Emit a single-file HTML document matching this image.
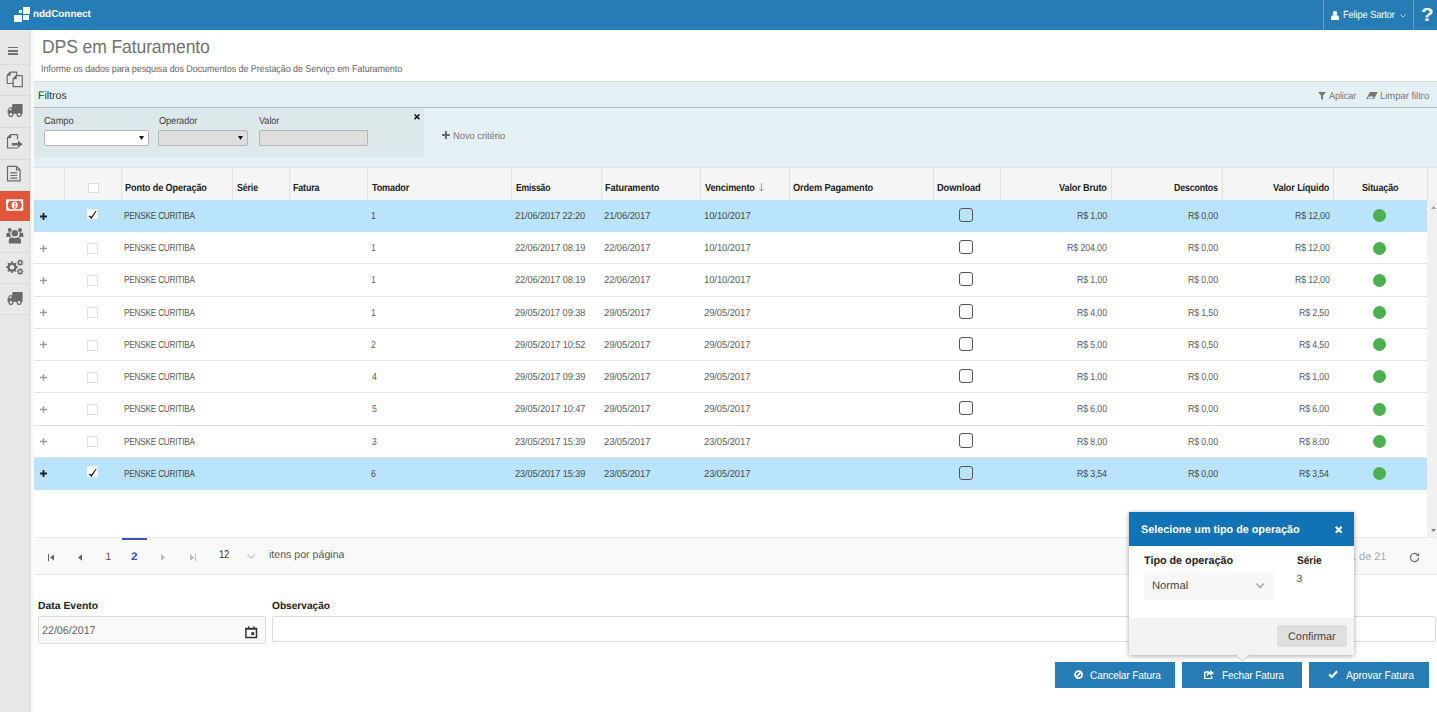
<!DOCTYPE html>
<html lang="pt-br"><head><meta charset="utf-8"><title>DPS em Faturamento</title>
<style>
html,body{margin:0;padding:0;}
body{width:1437px;height:712px;overflow:hidden;position:relative;background:#fff;font-family:"Liberation Sans",sans-serif;text-rendering:geometricPrecision;}
.b{position:absolute;box-sizing:border-box;display:block;}
.t{position:absolute;white-space:nowrap;display:block;}
</style></head><body>
<div class="b" style="left:0px;top:0px;width:1437px;height:30px;background:#267db5;"></div>
<div class="b" style="left:23.3px;top:7px;width:6.8px;height:6.5px;background:#fff;"></div>
<div class="b" style="left:18.7px;top:10.1px;width:3.4px;height:3.4px;background:#fff;"></div>
<div class="b" style="left:14.2px;top:15px;width:7.9px;height:7.1px;background:#fff;"></div>
<div class="b" style="left:23.3px;top:15px;width:5.8px;height:5px;background:#fff;"></div>
<span class="t" style="left:32.75px;top:8px;font-size:10px;line-height:13px;color:#fff;font-weight:bold;letter-spacing:-0.009px;transform:scaleX(0.9919);transform-origin:0 50%;">nddConnect</span>
<div class="b" style="left:1323px;top:0px;width:1px;height:30px;background:rgba(255,255,255,.28);"></div>
<div class="b" style="left:1413px;top:0px;width:1px;height:30px;background:rgba(255,255,255,.28);"></div>
<svg class="b" style="left:1331px;top:11px;" width="8" height="9" viewBox="0 0 8 9"><circle cx="4" cy="2.3" r="2.3" fill="#fff"/><path d="M0 9 V6.6 Q0 4.2 2.2 4.2 H5.8 Q8 4.2 8 6.6 V9 Z" fill="#fff"/></svg>
<span class="t" style="left:1343.44px;top:9px;font-size:10.4px;line-height:14px;color:#fff;letter-spacing:-0.099px;transform:scaleX(0.8898);transform-origin:0 50%;">Felipe Sartor</span>
<svg class="b" style="left:1399.7px;top:13.6px;" width="6" height="3.6" viewBox="0 0 6 3.6"><path d="M0.4 0.4 L3 3 L5.6 0.4" fill="none" stroke="#c5dcec" stroke-width="0.9"/></svg>
<span class="t" style="left:1421.36px;top:3px;font-size:18.6px;line-height:24px;color:#fff;font-weight:bold;transform:scaleX(1.1113);transform-origin:0 50%;">?</span>
<div class="b" style="left:0px;top:30px;width:29px;height:682px;background:#e8e8e8;"></div>
<div class="b" style="left:29px;top:30px;width:1px;height:682px;background:#dbdbdb;"></div>
<div class="b" style="left:30px;top:30px;width:4px;height:682px;background:linear-gradient(to right,#ececec,#fff);"></div>
<div class="b" style="left:0px;top:64px;width:29px;height:1px;background:#dcdcda;"></div>
<div class="b" style="left:0px;top:95px;width:29px;height:1px;background:#dcdcda;"></div>
<div class="b" style="left:0px;top:127px;width:29px;height:1px;background:#dcdcda;"></div>
<div class="b" style="left:0px;top:159px;width:29px;height:1px;background:#dcdcda;"></div>
<div class="b" style="left:0px;top:252px;width:29px;height:1px;background:#dcdcda;"></div>
<div class="b" style="left:0px;top:283px;width:29px;height:1px;background:#dcdcda;"></div>
<div class="b" style="left:0px;top:314px;width:29px;height:1px;background:#dcdcda;"></div>
<div class="b" style="left:0px;top:190.5px;width:30px;height:30.5px;background:#e2553a;"></div>
<div class="b" style="left:8.2px;top:46.8px;width:10.2px;height:1.6px;background:#707070;"></div>
<div class="b" style="left:8.2px;top:50.099999999999994px;width:10.2px;height:1.6px;background:#707070;"></div>
<div class="b" style="left:8.2px;top:53.4px;width:10.2px;height:1.6px;background:#707070;"></div>
<svg class="b" style="left:5.5px;top:70.5px;" width="18" height="17" viewBox="5.5 70.5 18 17"><path d="M9.6 71.7 H16.2 V75 M13 83 H6.7 V74.6 L9.6 71.7 V74.6 H6.7" fill="none" stroke="#6a6a6a" stroke-width="1.2" stroke-linejoin="round"/><path d="M15.6 75.2 H21.8 V86.1 H12.6 V78.2 L15.6 75.2 V78.2 H12.6" fill="none" stroke="#6a6a6a" stroke-width="1.2" stroke-linejoin="round"/></svg>
<svg class="b" style="left:6.5px;top:104.2px;" width="17" height="13" viewBox="6.5 0 17 13"><path d="M11.8 0 H22.1 V9.8 H7.1 V6.2 L9 3.3 H11.8 Z" fill="#6a6a6a"/><path d="M8.3 6.2 L9.6 4.3 H10.9 V6.2 Z" fill="#e9e9e9"/><circle cx="10.4" cy="10.4" r="2" fill="#e9e9e9" stroke="#6a6a6a" stroke-width="1.3"/><circle cx="18.6" cy="10.4" r="2" fill="#e9e9e9" stroke="#6a6a6a" stroke-width="1.3"/></svg>
<svg class="b" style="left:6.5px;top:292.3px;" width="17" height="13" viewBox="6.5 0 17 13"><path d="M11.8 0 H22.1 V9.8 H7.1 V6.2 L9 3.3 H11.8 Z" fill="#6a6a6a"/><path d="M8.3 6.2 L9.6 4.3 H10.9 V6.2 Z" fill="#e9e9e9"/><circle cx="10.4" cy="10.4" r="2" fill="#e9e9e9" stroke="#6a6a6a" stroke-width="1.3"/><circle cx="18.6" cy="10.4" r="2" fill="#e9e9e9" stroke="#6a6a6a" stroke-width="1.3"/></svg>
<svg class="b" style="left:5.5px;top:133px;" width="18" height="17" viewBox="5.5 133 18 17"><path d="M17 139.6 V134.7 H10 L7 137.7 V148 H17 V147.2 M10 134.7 V137.7 H7" fill="none" stroke="#6a6a6a" stroke-width="1.2" stroke-linejoin="round"/><path d="M11.3 143 H17.5 V140.6 L22.1 144.2 L17.5 147.8 V145.4 H11.3 Z" fill="#6a6a6a"/></svg>
<svg class="b" style="left:5.5px;top:165px;" width="16" height="18" viewBox="5.5 165 16 18"><path d="M7 166.4 H16 L19.6 170 V180.9 H7 Z M16 166.4 V170 H19.6" fill="none" stroke="#6a6a6a" stroke-width="1.2" stroke-linejoin="round"/><path d="M9.8 172.9 H16.7 M9.8 175.5 H16.7 M9.8 178.1 H16.7" stroke="#6a6a6a" stroke-width="1.1"/></svg>
<svg class="b" style="left:6px;top:199px;" width="18" height="12" viewBox="6 199 18 12"><rect x="6.1" y="199.3" width="17.1" height="11.5" fill="#fff"/><path d="M9.6 200.9 H19.9 Q21.9 203 21.9 205.05 Q21.9 207.1 19.9 209.2 H9.6 Q7.6 207.1 7.6 205.05 Q7.6 203 9.6 200.9 Z" fill="#e2583b"/><ellipse cx="14.75" cy="205.05" rx="3.1" ry="3.6" fill="#fff"/><path d="M14 203.8 L15.1 203 V207 M14 207.1 H16.1" fill="none" stroke="#e2583b" stroke-width="0.9"/></svg>
<svg class="b" style="left:6px;top:227px;" width="18" height="17" viewBox="6 227 18 17"><circle cx="9.7" cy="229.9" r="2" fill="#6a6a6a"/><circle cx="20" cy="229.9" r="2" fill="#6a6a6a"/><path d="M6.4 237 V234.6 Q6.4 232.6 8.4 232.6 H10.4 Q10 235 11 237 Z" fill="#6a6a6a"/><path d="M23.4 237 V234.6 Q23.4 232.6 21.4 232.6 H19.4 Q19.8 235 18.8 237 Z" fill="#6a6a6a"/><circle cx="14.8" cy="233.3" r="3.2" fill="#6a6a6a"/><path d="M8.8 243.5 V240.6 Q8.8 237.4 12 237.2 Q14.8 239 17.7 237.2 Q21 237.4 21 240.6 V243.5 Q21 243.6 20 243.6 H9.8 Q8.8 243.6 8.8 243.5 Z" fill="#6a6a6a"/></svg>
<svg class="b" style="left:5px;top:258px;" width="20" height="18" viewBox="5 258 20 18"><path d="M17.87 266.62 L17.87 267.78 L16.31 268.51 L15.97 269.32 L16.56 270.94 L15.74 271.76 L14.12 271.17 L13.31 271.51 L12.58 273.07 L11.42 273.07 L10.69 271.51 L9.88 271.17 L8.26 271.76 L7.44 270.94 L8.03 269.32 L7.69 268.51 L6.13 267.78 L6.13 266.62 L7.69 265.89 L8.03 265.08 L7.44 263.46 L8.26 262.64 L9.88 263.23 L10.69 262.89 L11.42 261.33 L12.58 261.33 L13.31 262.89 L14.12 263.23 L15.74 262.64 L16.56 263.46 L15.97 265.08 L16.31 265.89 Z M14.3 267.2 A2.3 2.3 0 1 0 9.7 267.2 A2.3 2.3 0 1 0 14.3 267.2 Z" fill="#6a6a6a" fill-rule="evenodd"/><path d="M23.48 262.28 L23.48 262.92 L22.50 263.30 L22.32 263.73 L22.75 264.69 L22.29 265.15 L21.33 264.72 L20.90 264.90 L20.52 265.88 L19.88 265.88 L19.50 264.90 L19.07 264.72 L18.11 265.15 L17.65 264.69 L18.08 263.73 L17.90 263.30 L16.92 262.92 L16.92 262.28 L17.90 261.90 L18.08 261.47 L17.65 260.51 L18.11 260.05 L19.07 260.48 L19.50 260.30 L19.88 259.32 L20.52 259.32 L20.90 260.30 L21.33 260.48 L22.29 260.05 L22.75 260.51 L22.32 261.47 L22.50 261.90 Z M21.4 262.6 A1.2 1.2 0 1 0 19.0 262.6 A1.2 1.2 0 1 0 21.4 262.6 Z" fill="#6a6a6a" fill-rule="evenodd"/><path d="M23.48 271.28 L23.48 271.92 L22.50 272.30 L22.32 272.73 L22.75 273.69 L22.29 274.15 L21.33 273.72 L20.90 273.90 L20.52 274.88 L19.88 274.88 L19.50 273.90 L19.07 273.72 L18.11 274.15 L17.65 273.69 L18.08 272.73 L17.90 272.30 L16.92 271.92 L16.92 271.28 L17.90 270.90 L18.08 270.47 L17.65 269.51 L18.11 269.05 L19.07 269.48 L19.50 269.30 L19.88 268.32 L20.52 268.32 L20.90 269.30 L21.33 269.48 L22.29 269.05 L22.75 269.51 L22.32 270.47 L22.50 270.90 Z M21.4 271.6 A1.2 1.2 0 1 0 19.0 271.6 A1.2 1.2 0 1 0 21.4 271.6 Z" fill="#6a6a6a" fill-rule="evenodd"/></svg>
<span class="t" style="left:41.66px;top:35px;font-size:18.9px;line-height:25px;color:#727272;letter-spacing:-0.134px;transform:scaleX(0.9306);transform-origin:0 50%;">DPS em Faturamento</span>
<span class="t" style="left:41.17px;top:63px;font-size:10px;line-height:13px;color:#666;letter-spacing:-0.090px;transform:scaleX(0.9005);transform-origin:0 50%;">Informe os dados para pesquisa dos Documentos de Prestação de Serviço em Faturamento</span>
<div class="b" style="left:34px;top:81px;width:1403px;height:86px;background:#e4f0f3;border-top:1px solid #d3dde0;"></div>
<div class="b" style="left:34px;top:107px;width:1403px;height:1px;background:#b3bcbf;"></div>
<span class="t" style="left:37.53px;top:89px;font-size:10.9px;line-height:14px;color:#333;letter-spacing:-0.022px;transform:scaleX(0.9735);transform-origin:0 50%;">Filtros</span>
<div class="b" style="left:34px;top:108px;width:390px;height:48.5px;background:#dde8ea;"></div>
<span class="t" style="left:43.53px;top:115px;font-size:10.2px;line-height:13px;color:#444;letter-spacing:-0.125px;transform:scaleX(0.9144);transform-origin:0 50%;">Campo</span>
<span class="t" style="left:158.57px;top:115px;font-size:10.2px;line-height:13px;color:#444;letter-spacing:-0.106px;transform:scaleX(0.9052);transform-origin:0 50%;">Operador</span>
<span class="t" style="left:259.06px;top:115px;font-size:10.2px;line-height:13px;color:#444;letter-spacing:-0.102px;transform:scaleX(0.9025);transform-origin:0 50%;">Valor</span>
<div class="b" style="left:43.5px;top:130px;width:105px;height:15.5px;background:#fff;border:1px solid #b5b5b5;border-radius:2px;"></div>
<div class="b" style="left:158px;top:130px;width:90px;height:15.5px;background:#dedede;border:1px solid #b5b5b5;border-radius:2px;"></div>
<div class="b" style="left:259px;top:130px;width:108.75px;height:15.5px;background:#dedede;border:1px solid #b5b5b5;border-radius:1px;"></div>
<svg class="b" style="left:138.5px;top:136px;" width="5" height="4" viewBox="0 0 5 4"><path d="M0 0 H5 L2.5 4 Z" fill="#111"/></svg>
<svg class="b" style="left:238.2px;top:136px;" width="5" height="4" viewBox="0 0 5 4"><path d="M0 0 H5 L2.5 4 Z" fill="#111"/></svg>
<svg class="b" style="left:413.5px;top:114px;" width="6" height="5.6" viewBox="0 0 6 5.6"><path d="M0.6 0.5 L5.4 5.1 M5.4 0.5 L0.6 5.1" stroke="#111" stroke-width="1.5"/></svg>
<svg class="b" style="left:441.8px;top:131px;" width="7.8" height="8" viewBox="0 0 8 8"><path d="M4 0 V8 M0 4 H8" stroke="#666" stroke-width="2"/></svg>
<span class="t" style="left:453.13px;top:130px;font-size:10px;line-height:13px;color:#777;letter-spacing:-0.050px;transform:scaleX(0.9394);transform-origin:0 50%;">Novo critério</span>
<svg class="b" style="left:1317.5px;top:91.5px;" width="8" height="8.2" viewBox="0 0 8 8.2"><path d="M0 0 H8 L5 3.6 V8.2 L3 6.6 V3.6 Z" fill="#777"/></svg>
<span class="t" style="left:1328.79px;top:90px;font-size:10px;line-height:13px;color:#777;letter-spacing:-0.089px;transform:scaleX(0.9045);transform-origin:0 50%;">Aplicar</span>
<svg class="b" style="left:1366px;top:91.5px;" width="11.7" height="7.5" viewBox="0 0 11.7 7.5"><path d="M4 0 H11.7 L7.7 7.5 H0 Z" fill="#777"/><path d="M2.6 4.6 H7.6 L6.7 6.4 H1.7 Z" fill="#e4f0f3"/></svg>
<span class="t" style="left:1379.72px;top:90px;font-size:10px;line-height:13px;color:#777;letter-spacing:-0.038px;transform:scaleX(0.9498);transform-origin:0 50%;">Limpar filtro</span>
<div class="b" style="left:34px;top:167px;width:1403px;height:33px;background:#f5f5f5;border-top:1px solid #e2e2e2;"></div>
<div class="b" style="left:64.0px;top:168px;width:1px;height:32px;background:#e3e3e3;"></div>
<div class="b" style="left:120.5px;top:168px;width:1px;height:32px;background:#e3e3e3;"></div>
<div class="b" style="left:232.0px;top:168px;width:1px;height:32px;background:#e3e3e3;"></div>
<div class="b" style="left:288.5px;top:168px;width:1px;height:32px;background:#e3e3e3;"></div>
<div class="b" style="left:367.0px;top:168px;width:1px;height:32px;background:#e3e3e3;"></div>
<div class="b" style="left:510.5px;top:168px;width:1px;height:32px;background:#e3e3e3;"></div>
<div class="b" style="left:600.5px;top:168px;width:1px;height:32px;background:#e3e3e3;"></div>
<div class="b" style="left:700.0px;top:168px;width:1px;height:32px;background:#e3e3e3;"></div>
<div class="b" style="left:789.0px;top:168px;width:1px;height:32px;background:#e3e3e3;"></div>
<div class="b" style="left:932.5px;top:168px;width:1px;height:32px;background:#e3e3e3;"></div>
<div class="b" style="left:999.5px;top:168px;width:1px;height:32px;background:#e3e3e3;"></div>
<div class="b" style="left:1111.0px;top:168px;width:1px;height:32px;background:#e3e3e3;"></div>
<div class="b" style="left:1221.5px;top:168px;width:1px;height:32px;background:#e3e3e3;"></div>
<div class="b" style="left:1332.5px;top:168px;width:1px;height:32px;background:#e3e3e3;"></div>
<div class="b" style="left:1426.5px;top:168px;width:1px;height:32px;background:#e3e3e3;"></div>
<span class="t" style="left:124.89px;top:182px;font-size:10.3px;line-height:13px;color:#222;font-weight:bold;letter-spacing:-0.123px;transform:scaleX(0.8864);transform-origin:0 50%;">Ponto de Operação</span>
<span class="t" style="left:236.75px;top:182px;font-size:10.3px;line-height:13px;color:#222;font-weight:bold;letter-spacing:-0.164px;transform:scaleX(0.8579);transform-origin:0 50%;">Série</span>
<span class="t" style="left:293.16px;top:182px;font-size:10.3px;line-height:13px;color:#222;font-weight:bold;letter-spacing:-0.157px;transform:scaleX(0.8645);transform-origin:0 50%;">Fatura</span>
<span class="t" style="left:371.65px;top:182px;font-size:10.3px;line-height:13px;color:#222;font-weight:bold;letter-spacing:-0.161px;transform:scaleX(0.8795);transform-origin:0 50%;">Tomador</span>
<span class="t" style="left:515.93px;top:182px;font-size:10.3px;line-height:13px;color:#222;font-weight:bold;letter-spacing:-0.212px;transform:scaleX(0.8373);transform-origin:0 50%;">Emissão</span>
<span class="t" style="left:604.89px;top:182px;font-size:10.3px;line-height:13px;color:#222;font-weight:bold;letter-spacing:-0.124px;transform:scaleX(0.8908);transform-origin:0 50%;">Faturamento</span>
<span class="t" style="left:704.94px;top:182px;font-size:10.3px;line-height:13px;color:#222;font-weight:bold;letter-spacing:-0.139px;transform:scaleX(0.8825);transform-origin:0 50%;">Vencimento</span>
<svg class="b" style="left:758.5px;top:182.5px;" width="5" height="8.5" viewBox="0 0 5 8.5"><path d="M2.5 0 V8 M0.5 5.8 L2.5 8 L4.5 5.8" fill="none" stroke="#888" stroke-width="0.8"/></svg>
<span class="t" style="left:793.12px;top:182px;font-size:10.3px;line-height:13px;color:#222;font-weight:bold;letter-spacing:-0.128px;transform:scaleX(0.8935);transform-origin:0 50%;">Ordem Pagamento</span>
<span class="t" style="left:936.88px;top:182px;font-size:10.3px;line-height:13px;color:#222;font-weight:bold;letter-spacing:-0.120px;transform:scaleX(0.9042);transform-origin:0 50%;">Download</span>
<span class="t" style="left:1059.19px;top:182px;font-size:10.3px;line-height:13px;color:#222;font-weight:bold;letter-spacing:-0.120px;transform:scaleX(0.8822);transform-origin:0 50%;">Valor Bruto</span>
<span class="t" style="left:1174.16px;top:182px;font-size:10.3px;line-height:13px;color:#222;font-weight:bold;letter-spacing:-0.173px;transform:scaleX(0.8571);transform-origin:0 50%;">Descontos</span>
<span class="t" style="left:1272.94px;top:182px;font-size:10.3px;line-height:13px;color:#222;font-weight:bold;letter-spacing:-0.116px;transform:scaleX(0.8837);transform-origin:0 50%;">Valor Líquido</span>
<span class="t" style="left:1361.74px;top:182px;font-size:10.3px;line-height:13px;color:#222;font-weight:bold;letter-spacing:-0.143px;transform:scaleX(0.8730);transform-origin:0 50%;">Situação</span>
<div class="b" style="left:88px;top:182.5px;width:10.5px;height:10.5px;background:#fff;border:1px solid #dcdcdc;"></div>
<div class="b" style="left:34px;top:200.0px;width:1393px;height:32.25px;background:#b9e4fc;"></div>
<svg class="b" style="left:40px;top:212.5px;" width="7" height="7" viewBox="0 0 7 7"><path d="M3.5 0 V7 M0 3.5 H7" stroke="#222" stroke-width="1.8"/></svg>
<div class="b" style="left:87.4px;top:208.6px;width:10.6px;height:10.7px;background:#fff;border:1px solid #f0f6fa;"></div>
<svg class="b" style="left:88.4px;top:210.2px;" width="9" height="9" viewBox="0 0 9 9"><path d="M0.9 6.1 L3.4 8.6 L8.2 0.9 L3.5 6.9 Z" fill="#111" stroke="#111" stroke-width="0.7" stroke-linejoin="round"/></svg>
<span class="t" style="left:124.23px;top:210px;font-size:10.2px;line-height:13px;color:#4a4a4a;letter-spacing:-0.245px;transform:scaleX(0.8042);transform-origin:0 50%;">PENSKE CURITIBA</span>
<span class="t" style="left:371.22px;top:210px;font-size:10.2px;line-height:13px;color:#4a4a4a;transform:scaleX(.85);transform-origin:0 50%;">1</span>
<span class="t" style="left:515.04px;top:210px;font-size:10.2px;line-height:13px;color:#4a4a4a;letter-spacing:-0.095px;transform:scaleX(0.9016);transform-origin:0 50%;">21/06/2017 22:20</span>
<span class="t" style="left:604.03px;top:210px;font-size:10.2px;line-height:13px;color:#4a4a4a;letter-spacing:-0.079px;transform:scaleX(0.9225);transform-origin:0 50%;">21/06/2017</span>
<span class="t" style="left:703.78px;top:210px;font-size:10.2px;line-height:13px;color:#4a4a4a;letter-spacing:-0.074px;transform:scaleX(0.9267);transform-origin:0 50%;">10/10/2017</span>
<div class="b" style="left:959px;top:207.8px;width:14.2px;height:14.2px;background:transparent;border:1.5px solid #555;border-radius:3px;"></div>
<span class="t" style="left:1077.03px;top:210px;font-size:10.2px;line-height:13px;color:#4a4a4a;letter-spacing:-0.148px;transform:scaleX(0.8628);transform-origin:0 50%;">R$ 1,00</span>
<span class="t" style="left:1188.03px;top:210px;font-size:10.2px;line-height:13px;color:#4a4a4a;letter-spacing:-0.148px;transform:scaleX(0.8628);transform-origin:0 50%;">R$ 0,00</span>
<span class="t" style="left:1294.53px;top:210px;font-size:10.2px;line-height:13px;color:#4a4a4a;letter-spacing:-0.148px;transform:scaleX(0.8625);transform-origin:0 50%;">R$ 12,00</span>
<div class="b" style="left:1373.3px;top:209.3px;width:13px;height:13px;background:#4caf50;border-radius:50%;"></div>
<div class="b" style="left:34px;top:263.44px;width:1393px;height:1px;background:#e4e4e4;"></div>
<svg class="b" style="left:40px;top:244.72px;" width="7" height="7" viewBox="0 0 7 7"><path d="M3.5 0 V7 M0 3.5 H7" stroke="#9a9a9a" stroke-width="1.4"/></svg>
<div class="b" style="left:87.2px;top:243px;width:11px;height:11px;background:#fff;border:1px solid #e0e0e0;"></div>
<span class="t" style="left:124.23px;top:242px;font-size:10.2px;line-height:13px;color:#5c5c5c;letter-spacing:-0.245px;transform:scaleX(0.8042);transform-origin:0 50%;">PENSKE CURITIBA</span>
<span class="t" style="left:371.22px;top:242px;font-size:10.2px;line-height:13px;color:#5c5c5c;transform:scaleX(.85);transform-origin:0 50%;">1</span>
<span class="t" style="left:515.04px;top:242px;font-size:10.2px;line-height:13px;color:#5c5c5c;letter-spacing:-0.094px;transform:scaleX(0.9025);transform-origin:0 50%;">22/06/2017 08:19</span>
<span class="t" style="left:604.03px;top:242px;font-size:10.2px;line-height:13px;color:#5c5c5c;letter-spacing:-0.079px;transform:scaleX(0.9225);transform-origin:0 50%;">22/06/2017</span>
<span class="t" style="left:703.78px;top:242px;font-size:10.2px;line-height:13px;color:#5c5c5c;letter-spacing:-0.074px;transform:scaleX(0.9267);transform-origin:0 50%;">10/10/2017</span>
<div class="b" style="left:959px;top:240.02px;width:14.2px;height:14.2px;background:#fff;border:1.5px solid #555;border-radius:3px;"></div>
<span class="t" style="left:1067.22px;top:242px;font-size:10.2px;line-height:13px;color:#5c5c5c;letter-spacing:-0.142px;transform:scaleX(0.8679);transform-origin:0 50%;">R$ 204,00</span>
<span class="t" style="left:1188.03px;top:242px;font-size:10.2px;line-height:13px;color:#5c5c5c;letter-spacing:-0.148px;transform:scaleX(0.8628);transform-origin:0 50%;">R$ 0,00</span>
<span class="t" style="left:1294.53px;top:242px;font-size:10.2px;line-height:13px;color:#5c5c5c;letter-spacing:-0.148px;transform:scaleX(0.8625);transform-origin:0 50%;">R$ 12,00</span>
<div class="b" style="left:1373.3px;top:241.52px;width:13px;height:13px;background:#4caf50;border-radius:50%;"></div>
<div class="b" style="left:34px;top:295.65999999999997px;width:1393px;height:1px;background:#e4e4e4;"></div>
<svg class="b" style="left:40px;top:276.94px;" width="7" height="7" viewBox="0 0 7 7"><path d="M3.5 0 V7 M0 3.5 H7" stroke="#9a9a9a" stroke-width="1.4"/></svg>
<div class="b" style="left:87.2px;top:275px;width:11px;height:11px;background:#fff;border:1px solid #e0e0e0;"></div>
<span class="t" style="left:124.23px;top:274px;font-size:10.2px;line-height:13px;color:#5c5c5c;letter-spacing:-0.245px;transform:scaleX(0.8042);transform-origin:0 50%;">PENSKE CURITIBA</span>
<span class="t" style="left:371.22px;top:274px;font-size:10.2px;line-height:13px;color:#5c5c5c;transform:scaleX(.85);transform-origin:0 50%;">1</span>
<span class="t" style="left:515.04px;top:274px;font-size:10.2px;line-height:13px;color:#5c5c5c;letter-spacing:-0.094px;transform:scaleX(0.9025);transform-origin:0 50%;">22/06/2017 08:19</span>
<span class="t" style="left:604.03px;top:274px;font-size:10.2px;line-height:13px;color:#5c5c5c;letter-spacing:-0.079px;transform:scaleX(0.9225);transform-origin:0 50%;">22/06/2017</span>
<span class="t" style="left:703.78px;top:274px;font-size:10.2px;line-height:13px;color:#5c5c5c;letter-spacing:-0.074px;transform:scaleX(0.9267);transform-origin:0 50%;">10/10/2017</span>
<div class="b" style="left:959px;top:272.24px;width:14.2px;height:14.2px;background:#fff;border:1.5px solid #555;border-radius:3px;"></div>
<span class="t" style="left:1077.03px;top:274px;font-size:10.2px;line-height:13px;color:#5c5c5c;letter-spacing:-0.148px;transform:scaleX(0.8628);transform-origin:0 50%;">R$ 1,00</span>
<span class="t" style="left:1188.03px;top:274px;font-size:10.2px;line-height:13px;color:#5c5c5c;letter-spacing:-0.148px;transform:scaleX(0.8628);transform-origin:0 50%;">R$ 0,00</span>
<span class="t" style="left:1294.53px;top:274px;font-size:10.2px;line-height:13px;color:#5c5c5c;letter-spacing:-0.148px;transform:scaleX(0.8625);transform-origin:0 50%;">R$ 12,00</span>
<div class="b" style="left:1373.3px;top:273.74px;width:13px;height:13px;background:#4caf50;border-radius:50%;"></div>
<div class="b" style="left:34px;top:327.88px;width:1393px;height:1px;background:#e4e4e4;"></div>
<svg class="b" style="left:40px;top:309.15999999999997px;" width="7" height="7" viewBox="0 0 7 7"><path d="M3.5 0 V7 M0 3.5 H7" stroke="#9a9a9a" stroke-width="1.4"/></svg>
<div class="b" style="left:87.2px;top:307px;width:11px;height:11px;background:#fff;border:1px solid #e0e0e0;"></div>
<span class="t" style="left:124.23px;top:307px;font-size:10.2px;line-height:13px;color:#5c5c5c;letter-spacing:-0.245px;transform:scaleX(0.8042);transform-origin:0 50%;">PENSKE CURITIBA</span>
<span class="t" style="left:371.22px;top:307px;font-size:10.2px;line-height:13px;color:#5c5c5c;transform:scaleX(.85);transform-origin:0 50%;">1</span>
<span class="t" style="left:515.04px;top:307px;font-size:10.2px;line-height:13px;color:#5c5c5c;letter-spacing:-0.094px;transform:scaleX(0.9021);transform-origin:0 50%;">29/05/2017 09:38</span>
<span class="t" style="left:604.03px;top:307px;font-size:10.2px;line-height:13px;color:#5c5c5c;letter-spacing:-0.079px;transform:scaleX(0.9225);transform-origin:0 50%;">29/05/2017</span>
<span class="t" style="left:704.03px;top:307px;font-size:10.2px;line-height:13px;color:#5c5c5c;letter-spacing:-0.079px;transform:scaleX(0.9225);transform-origin:0 50%;">29/05/2017</span>
<div class="b" style="left:959px;top:304.46px;width:14.2px;height:14.2px;background:#fff;border:1.5px solid #555;border-radius:3px;"></div>
<span class="t" style="left:1077.03px;top:307px;font-size:10.2px;line-height:13px;color:#5c5c5c;letter-spacing:-0.148px;transform:scaleX(0.8628);transform-origin:0 50%;">R$ 4,00</span>
<span class="t" style="left:1188.03px;top:307px;font-size:10.2px;line-height:13px;color:#5c5c5c;letter-spacing:-0.148px;transform:scaleX(0.8628);transform-origin:0 50%;">R$ 1,50</span>
<span class="t" style="left:1299.28px;top:307px;font-size:10.2px;line-height:13px;color:#5c5c5c;letter-spacing:-0.148px;transform:scaleX(0.8628);transform-origin:0 50%;">R$ 2,50</span>
<div class="b" style="left:1373.3px;top:305.96px;width:13px;height:13px;background:#4caf50;border-radius:50%;"></div>
<div class="b" style="left:34px;top:360.1px;width:1393px;height:1px;background:#e4e4e4;"></div>
<svg class="b" style="left:40px;top:341.38px;" width="7" height="7" viewBox="0 0 7 7"><path d="M3.5 0 V7 M0 3.5 H7" stroke="#9a9a9a" stroke-width="1.4"/></svg>
<div class="b" style="left:87.2px;top:340px;width:11px;height:11px;background:#fff;border:1px solid #e0e0e0;"></div>
<span class="t" style="left:124.23px;top:339px;font-size:10.2px;line-height:13px;color:#5c5c5c;letter-spacing:-0.245px;transform:scaleX(0.8042);transform-origin:0 50%;">PENSKE CURITIBA</span>
<span class="t" style="left:371.49px;top:339px;font-size:10.2px;line-height:13px;color:#5c5c5c;transform:scaleX(.85);transform-origin:0 50%;">2</span>
<span class="t" style="left:515.04px;top:339px;font-size:10.2px;line-height:13px;color:#5c5c5c;letter-spacing:-0.093px;transform:scaleX(0.9028);transform-origin:0 50%;">29/05/2017 10:52</span>
<span class="t" style="left:604.03px;top:339px;font-size:10.2px;line-height:13px;color:#5c5c5c;letter-spacing:-0.079px;transform:scaleX(0.9225);transform-origin:0 50%;">29/05/2017</span>
<span class="t" style="left:704.03px;top:339px;font-size:10.2px;line-height:13px;color:#5c5c5c;letter-spacing:-0.079px;transform:scaleX(0.9225);transform-origin:0 50%;">29/05/2017</span>
<div class="b" style="left:959px;top:336.68px;width:14.2px;height:14.2px;background:#fff;border:1.5px solid #555;border-radius:3px;"></div>
<span class="t" style="left:1077.03px;top:339px;font-size:10.2px;line-height:13px;color:#5c5c5c;letter-spacing:-0.148px;transform:scaleX(0.8628);transform-origin:0 50%;">R$ 5,00</span>
<span class="t" style="left:1188.03px;top:339px;font-size:10.2px;line-height:13px;color:#5c5c5c;letter-spacing:-0.148px;transform:scaleX(0.8628);transform-origin:0 50%;">R$ 0,50</span>
<span class="t" style="left:1299.28px;top:339px;font-size:10.2px;line-height:13px;color:#5c5c5c;letter-spacing:-0.148px;transform:scaleX(0.8628);transform-origin:0 50%;">R$ 4,50</span>
<div class="b" style="left:1373.3px;top:338.18px;width:13px;height:13px;background:#4caf50;border-radius:50%;"></div>
<div class="b" style="left:34px;top:392.32px;width:1393px;height:1px;background:#e4e4e4;"></div>
<svg class="b" style="left:40px;top:373.6px;" width="7" height="7" viewBox="0 0 7 7"><path d="M3.5 0 V7 M0 3.5 H7" stroke="#9a9a9a" stroke-width="1.4"/></svg>
<div class="b" style="left:87.2px;top:372px;width:11px;height:11px;background:#fff;border:1px solid #e0e0e0;"></div>
<span class="t" style="left:124.23px;top:371px;font-size:10.2px;line-height:13px;color:#5c5c5c;letter-spacing:-0.245px;transform:scaleX(0.8042);transform-origin:0 50%;">PENSKE CURITIBA</span>
<span class="t" style="left:371.77px;top:371px;font-size:10.2px;line-height:13px;color:#5c5c5c;transform:scaleX(.85);transform-origin:0 50%;">4</span>
<span class="t" style="left:515.04px;top:371px;font-size:10.2px;line-height:13px;color:#5c5c5c;letter-spacing:-0.094px;transform:scaleX(0.9025);transform-origin:0 50%;">29/05/2017 09:39</span>
<span class="t" style="left:604.03px;top:371px;font-size:10.2px;line-height:13px;color:#5c5c5c;letter-spacing:-0.079px;transform:scaleX(0.9225);transform-origin:0 50%;">29/05/2017</span>
<span class="t" style="left:704.03px;top:371px;font-size:10.2px;line-height:13px;color:#5c5c5c;letter-spacing:-0.079px;transform:scaleX(0.9225);transform-origin:0 50%;">29/05/2017</span>
<div class="b" style="left:959px;top:368.90000000000003px;width:14.2px;height:14.2px;background:#fff;border:1.5px solid #555;border-radius:3px;"></div>
<span class="t" style="left:1077.03px;top:371px;font-size:10.2px;line-height:13px;color:#5c5c5c;letter-spacing:-0.148px;transform:scaleX(0.8628);transform-origin:0 50%;">R$ 1,00</span>
<span class="t" style="left:1188.03px;top:371px;font-size:10.2px;line-height:13px;color:#5c5c5c;letter-spacing:-0.148px;transform:scaleX(0.8628);transform-origin:0 50%;">R$ 0,00</span>
<span class="t" style="left:1299.28px;top:371px;font-size:10.2px;line-height:13px;color:#5c5c5c;letter-spacing:-0.148px;transform:scaleX(0.8628);transform-origin:0 50%;">R$ 1,00</span>
<div class="b" style="left:1373.3px;top:370.40000000000003px;width:13px;height:13px;background:#4caf50;border-radius:50%;"></div>
<div class="b" style="left:34px;top:424.53999999999996px;width:1393px;height:1px;background:#e4e4e4;"></div>
<svg class="b" style="left:40px;top:405.82px;" width="7" height="7" viewBox="0 0 7 7"><path d="M3.5 0 V7 M0 3.5 H7" stroke="#9a9a9a" stroke-width="1.4"/></svg>
<div class="b" style="left:87.2px;top:404px;width:11px;height:11px;background:#fff;border:1px solid #e0e0e0;"></div>
<span class="t" style="left:124.23px;top:403px;font-size:10.2px;line-height:13px;color:#5c5c5c;letter-spacing:-0.245px;transform:scaleX(0.8042);transform-origin:0 50%;">PENSKE CURITIBA</span>
<span class="t" style="left:371.59px;top:403px;font-size:10.2px;line-height:13px;color:#5c5c5c;transform:scaleX(.85);transform-origin:0 50%;">5</span>
<span class="t" style="left:515.04px;top:403px;font-size:10.2px;line-height:13px;color:#5c5c5c;letter-spacing:-0.093px;transform:scaleX(0.9028);transform-origin:0 50%;">29/05/2017 10:47</span>
<span class="t" style="left:604.03px;top:403px;font-size:10.2px;line-height:13px;color:#5c5c5c;letter-spacing:-0.079px;transform:scaleX(0.9225);transform-origin:0 50%;">29/05/2017</span>
<span class="t" style="left:704.03px;top:403px;font-size:10.2px;line-height:13px;color:#5c5c5c;letter-spacing:-0.079px;transform:scaleX(0.9225);transform-origin:0 50%;">29/05/2017</span>
<div class="b" style="left:959px;top:401.12px;width:14.2px;height:14.2px;background:#fff;border:1.5px solid #555;border-radius:3px;"></div>
<span class="t" style="left:1077.03px;top:403px;font-size:10.2px;line-height:13px;color:#5c5c5c;letter-spacing:-0.148px;transform:scaleX(0.8628);transform-origin:0 50%;">R$ 6,00</span>
<span class="t" style="left:1188.03px;top:403px;font-size:10.2px;line-height:13px;color:#5c5c5c;letter-spacing:-0.148px;transform:scaleX(0.8628);transform-origin:0 50%;">R$ 0,00</span>
<span class="t" style="left:1299.28px;top:403px;font-size:10.2px;line-height:13px;color:#5c5c5c;letter-spacing:-0.148px;transform:scaleX(0.8628);transform-origin:0 50%;">R$ 6,00</span>
<div class="b" style="left:1373.3px;top:402.62px;width:13px;height:13px;background:#4caf50;border-radius:50%;"></div>
<div class="b" style="left:34px;top:456.76px;width:1393px;height:1px;background:#e4e4e4;"></div>
<svg class="b" style="left:40px;top:438.03999999999996px;" width="7" height="7" viewBox="0 0 7 7"><path d="M3.5 0 V7 M0 3.5 H7" stroke="#9a9a9a" stroke-width="1.4"/></svg>
<div class="b" style="left:87.2px;top:436px;width:11px;height:11px;background:#fff;border:1px solid #e0e0e0;"></div>
<span class="t" style="left:124.23px;top:436px;font-size:10.2px;line-height:13px;color:#5c5c5c;letter-spacing:-0.245px;transform:scaleX(0.8042);transform-origin:0 50%;">PENSKE CURITIBA</span>
<span class="t" style="left:371.61px;top:436px;font-size:10.2px;line-height:13px;color:#5c5c5c;transform:scaleX(.85);transform-origin:0 50%;">3</span>
<span class="t" style="left:515.04px;top:436px;font-size:10.2px;line-height:13px;color:#5c5c5c;letter-spacing:-0.094px;transform:scaleX(0.9025);transform-origin:0 50%;">23/05/2017 15:39</span>
<span class="t" style="left:604.03px;top:436px;font-size:10.2px;line-height:13px;color:#5c5c5c;letter-spacing:-0.079px;transform:scaleX(0.9225);transform-origin:0 50%;">23/05/2017</span>
<span class="t" style="left:704.03px;top:436px;font-size:10.2px;line-height:13px;color:#5c5c5c;letter-spacing:-0.079px;transform:scaleX(0.9225);transform-origin:0 50%;">23/05/2017</span>
<div class="b" style="left:959px;top:433.34px;width:14.2px;height:14.2px;background:#fff;border:1.5px solid #555;border-radius:3px;"></div>
<span class="t" style="left:1077.03px;top:436px;font-size:10.2px;line-height:13px;color:#5c5c5c;letter-spacing:-0.148px;transform:scaleX(0.8628);transform-origin:0 50%;">R$ 8,00</span>
<span class="t" style="left:1188.03px;top:436px;font-size:10.2px;line-height:13px;color:#5c5c5c;letter-spacing:-0.148px;transform:scaleX(0.8628);transform-origin:0 50%;">R$ 0,00</span>
<span class="t" style="left:1299.28px;top:436px;font-size:10.2px;line-height:13px;color:#5c5c5c;letter-spacing:-0.148px;transform:scaleX(0.8628);transform-origin:0 50%;">R$ 8,00</span>
<div class="b" style="left:1373.3px;top:434.84px;width:13px;height:13px;background:#4caf50;border-radius:50%;"></div>
<div class="b" style="left:34px;top:457.75px;width:1393px;height:32.25px;background:#b9e4fc;"></div>
<svg class="b" style="left:40px;top:470.26px;" width="7" height="7" viewBox="0 0 7 7"><path d="M3.5 0 V7 M0 3.5 H7" stroke="#222" stroke-width="1.8"/></svg>
<div class="b" style="left:87.4px;top:466.36px;width:10.6px;height:10.7px;background:#fff;border:1px solid #f0f6fa;"></div>
<svg class="b" style="left:88.4px;top:467.96px;" width="9" height="9" viewBox="0 0 9 9"><path d="M0.9 6.1 L3.4 8.6 L8.2 0.9 L3.5 6.9 Z" fill="#111" stroke="#111" stroke-width="0.7" stroke-linejoin="round"/></svg>
<span class="t" style="left:124.23px;top:468px;font-size:10.2px;line-height:13px;color:#4a4a4a;letter-spacing:-0.245px;transform:scaleX(0.8042);transform-origin:0 50%;">PENSKE CURITIBA</span>
<span class="t" style="left:371.48px;top:468px;font-size:10.2px;line-height:13px;color:#4a4a4a;transform:scaleX(.85);transform-origin:0 50%;">6</span>
<span class="t" style="left:515.04px;top:468px;font-size:10.2px;line-height:13px;color:#4a4a4a;letter-spacing:-0.094px;transform:scaleX(0.9025);transform-origin:0 50%;">23/05/2017 15:39</span>
<span class="t" style="left:604.03px;top:468px;font-size:10.2px;line-height:13px;color:#4a4a4a;letter-spacing:-0.079px;transform:scaleX(0.9225);transform-origin:0 50%;">23/05/2017</span>
<span class="t" style="left:704.03px;top:468px;font-size:10.2px;line-height:13px;color:#4a4a4a;letter-spacing:-0.079px;transform:scaleX(0.9225);transform-origin:0 50%;">23/05/2017</span>
<div class="b" style="left:959px;top:465.56px;width:14.2px;height:14.2px;background:transparent;border:1.5px solid #555;border-radius:3px;"></div>
<span class="t" style="left:1077.03px;top:468px;font-size:10.2px;line-height:13px;color:#4a4a4a;letter-spacing:-0.151px;transform:scaleX(0.8608);transform-origin:0 50%;">R$ 3,54</span>
<span class="t" style="left:1188.03px;top:468px;font-size:10.2px;line-height:13px;color:#4a4a4a;letter-spacing:-0.148px;transform:scaleX(0.8628);transform-origin:0 50%;">R$ 0,00</span>
<span class="t" style="left:1299.28px;top:468px;font-size:10.2px;line-height:13px;color:#4a4a4a;letter-spacing:-0.151px;transform:scaleX(0.8608);transform-origin:0 50%;">R$ 3,54</span>
<div class="b" style="left:1373.3px;top:467.06px;width:13px;height:13px;background:#4caf50;border-radius:50%;"></div>
<div class="b" style="left:1427px;top:200px;width:10px;height:337px;background:#f1f1f1;"></div>
<svg class="b" style="left:1431px;top:205.5px;" width="5" height="3" viewBox="0 0 5 3"><path d="M0 3 L2.5 0 L5 3 Z" fill="#a0a0a0"/></svg>
<svg class="b" style="left:1431px;top:528.5px;" width="5" height="3" viewBox="0 0 5 3"><path d="M0 0 L2.5 3 L5 0 Z" fill="#808080"/></svg>
<div class="b" style="left:34px;top:537px;width:1403px;height:38px;background:#f9f9f9;border-top:1px solid #ebebeb;border-bottom:1px solid #ebebeb;"></div>
<div class="b" style="left:122px;top:538px;width:25px;height:2px;background:#3f51b5;"></div>
<svg class="b" style="left:47.5px;top:554px;" width="6.5" height="7" viewBox="0 0 6.5 7"><path d="M0.5 0 V7" stroke="#666" stroke-width="1"/><path d="M6.5 0 V7 L2 3.5 Z" fill="#666"/></svg>
<svg class="b" style="left:77.5px;top:554px;" width="4.3" height="7" viewBox="0 0 4.3 7"><path d="M4.3 0 V7 L0 3.5 Z" fill="#666"/></svg>
<span class="t" style="left:105.16px;top:550px;font-size:11px;line-height:14px;color:#555;">1</span>
<span class="t" style="left:130.99px;top:550px;font-size:11px;line-height:14px;color:#3f51b5;font-weight:bold;transform:scaleX(1.0751);transform-origin:0 50%;">2</span>
<svg class="b" style="left:161px;top:554px;" width="4.3" height="7" viewBox="0 0 4.3 7"><path d="M0 0 V7 L4.3 3.5 Z" fill="#bdbdbd"/></svg>
<svg class="b" style="left:189.5px;top:554px;" width="6" height="7" viewBox="0 0 6 7"><path d="M5.5 0 V7" stroke="#bdbdbd" stroke-width="1"/><path d="M0 0 V7 L4.2 3.5 Z" fill="#bdbdbd"/></svg>
<span class="t" style="left:219.08px;top:548px;font-size:11.3px;line-height:15px;color:#3a3a3a;letter-spacing:-0.351px;transform:scaleX(0.8341);transform-origin:0 50%;">12</span>
<svg class="b" style="left:246.5px;top:554px;" width="8.5" height="5" viewBox="0 0 8.5 5"><path d="M0.5 0.5 L4.25 4.2 L8 0.5" fill="none" stroke="#c8c8c8" stroke-width="1.4"/></svg>
<span class="t" style="left:268.79px;top:548px;font-size:10.8px;line-height:14px;color:#555;letter-spacing:-0.014px;transform:scaleX(0.9845);transform-origin:0 50%;">itens por página</span>
<span class="t" style="left:1350.17px;top:550px;font-size:11px;line-height:14px;color:#aaa;letter-spacing:-0.008px;transform:scaleX(0.9920);transform-origin:0 50%;">1 de 21</span>
<svg class="b" style="left:1409px;top:551.5px;" width="11" height="11" viewBox="0 0 11 11"><path d="M9.6 5.5 A4.1 4.1 0 1 1 8.4 2.6" fill="none" stroke="#666" stroke-width="1.1"/><path d="M10.2 0.8 V4 H7 Z" fill="#666"/></svg>
<span class="t" style="left:37.51px;top:600px;font-size:10.3px;line-height:13px;color:#222;font-weight:bold;transform:scaleX(1.0095);transform-origin:0 50%;">Data Evento</span>
<span class="t" style="left:271.58px;top:600px;font-size:10.3px;line-height:13px;color:#222;font-weight:bold;letter-spacing:-0.015px;transform:scaleX(0.9868);transform-origin:0 50%;">Observação</span>
<div class="b" style="left:38px;top:616.25px;width:228px;height:27.5px;background:#f9f9f9;border:1px solid #dcdcdc;border-radius:2px;"></div>
<span class="t" style="left:42.06px;top:624px;font-size:11.2px;line-height:15px;color:#666;letter-spacing:-0.040px;transform:scaleX(0.9637);transform-origin:0 50%;">22/06/2017</span>
<svg class="b" style="left:245px;top:626px;" width="12.5" height="12.5" viewBox="0 0 12.5 12.5"><path d="M0.9 2.4 H11.5 V11.4 H0.9 Z" fill="none" stroke="#333" stroke-width="1.5"/><path d="M0.9 2 H11.5 V3.6 H0.9 Z" fill="#333"/><path d="M3.6 0.3 V2.4 M8.9 0.3 V2.4" stroke="#333" stroke-width="1.3"/><rect x="6.3" y="6.2" width="2.9" height="2.9" fill="#333"/></svg>
<div class="b" style="left:272px;top:616.25px;width:1163.5px;height:25.25px;background:#fff;border:1px solid #dcdcdc;border-radius:2px;"></div>
<div class="b" style="left:1055px;top:661.7px;width:120px;height:26.2px;background:#267db5;"></div>
<div class="b" style="left:1182px;top:661.7px;width:120px;height:26.2px;background:#267db5;"></div>
<div class="b" style="left:1309px;top:661.7px;width:120px;height:26.2px;background:#267db5;"></div>
<span class="t" style="left:1090.19px;top:669px;font-size:11.2px;line-height:15px;color:#fff;letter-spacing:-0.104px;transform:scaleX(0.9006);transform-origin:0 50%;">Cancelar Fatura</span>
<span class="t" style="left:1221.88px;top:669px;font-size:11.2px;line-height:15px;color:#fff;letter-spacing:-0.111px;transform:scaleX(0.8959);transform-origin:0 50%;">Fechar Fatura</span>
<span class="t" style="left:1345.98px;top:669px;font-size:11.2px;line-height:15px;color:#fff;letter-spacing:-0.080px;transform:scaleX(0.9234);transform-origin:0 50%;">Aprovar Fatura</span>
<svg class="b" style="left:1074px;top:670.3px;" width="9.2" height="9.2" viewBox="0 0 10 10"><circle cx="5" cy="5" r="3.9" fill="none" stroke="#fff" stroke-width="1.9"/><path d="M2.3 7.7 L7.7 2.3" stroke="#fff" stroke-width="1.9"/></svg>
<svg class="b" style="left:1204.3px;top:669.8px;" width="10" height="9.5" viewBox="0 0 10 9.5"><path d="M5 2 H1.6 Q0.7 2 0.7 2.9 V7.9 Q0.7 8.8 1.6 8.8 H6.8 Q7.7 8.8 7.7 7.9 V6" fill="none" stroke="#fff" stroke-width="1.4"/><path d="M6.2 0 L10 2.9 L6.2 5.8 V4 Q3.6 4 3 6.6 Q2.4 2 6.2 1.8 Z" fill="#fff"/></svg>
<svg class="b" style="left:1328px;top:670.3px;" width="10.2" height="8.2" viewBox="0 0 10.2 8.2"><path d="M1 4.3 L3.8 7 L9.2 1.2" fill="none" stroke="#fff" stroke-width="2.1"/></svg>
<div class="b" style="left:1129px;top:512px;width:225px;height:142.5px;background:#fff;box-shadow:0 1px 5px rgba(0,0,0,.35);"></div>
<div class="b" style="left:1129px;top:512px;width:225px;height:34px;background:#1173b5;"></div>
<span class="t" style="left:1141.19px;top:523px;font-size:11px;line-height:14px;color:#fff;font-weight:bold;letter-spacing:-0.018px;transform:scaleX(0.9828);transform-origin:0 50%;">Selecione um tipo de operação</span>
<svg class="b" style="left:1335.25px;top:525.5px;" width="7.5" height="7.5" viewBox="0 0 7.5 7.5"><path d="M0.8 0.8 L6.7 6.7 M6.7 0.8 L0.8 6.7" stroke="#fff" stroke-width="2.2"/></svg>
<span class="t" style="left:1144.38px;top:554px;font-size:11px;line-height:14px;color:#222;font-weight:bold;letter-spacing:-0.018px;transform:scaleX(0.9828);transform-origin:0 50%;">Tipo de operação</span>
<span class="t" style="left:1297.21px;top:554px;font-size:11px;line-height:14px;color:#222;font-weight:bold;letter-spacing:-0.086px;transform:scaleX(0.9276);transform-origin:0 50%;">Série</span>
<div class="b" style="left:1143.5px;top:571.5px;width:130.5px;height:28.5px;background:#f8f8f8;"></div>
<span class="t" style="left:1152.08px;top:579px;font-size:11px;line-height:14px;color:#444;transform:scaleX(1.0203);transform-origin:0 50%;">Normal</span>
<svg class="b" style="left:1255.5px;top:583px;" width="8.5" height="5.5" viewBox="0 0 8.5 5.5"><path d="M0.5 0.5 L4.25 4.6 L8 0.5" fill="none" stroke="#aaa" stroke-width="1.5"/></svg>
<span class="t" style="left:1296.60px;top:572px;font-size:10.5px;line-height:14px;color:#555;">3</span>
<div class="b" style="left:1129px;top:618px;width:225px;height:36.5px;background:#f3f3f3;"></div>
<div class="b" style="left:1277.25px;top:625px;width:69.25px;height:22px;background:#e0e0e0;"></div>
<span class="t" style="left:1287.95px;top:630px;font-size:11px;line-height:14px;color:#444;letter-spacing:-0.010px;transform:scaleX(0.9902);transform-origin:0 50%;">Confirmar</span>
<svg class="b" style="left:1234.5px;top:654px;" width="15" height="8" viewBox="0 0 15 8"><path d="M0 0 L7.5 7 L15 0 Z" fill="#f3f3f3"/><path d="M0 0.3 L7.5 7 L15 0.3" fill="none" stroke="#c4c4c4" stroke-width="0.8"/></svg>
</body></html>
